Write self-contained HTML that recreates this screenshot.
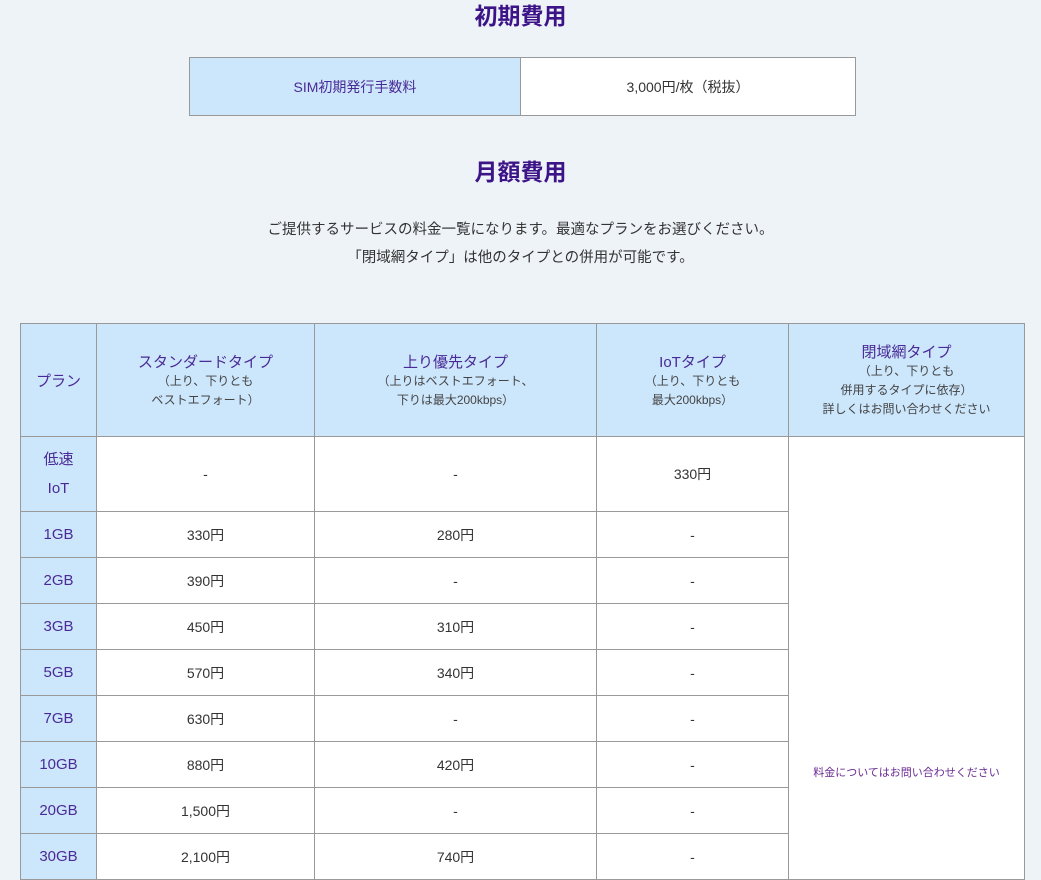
<!DOCTYPE html>
<html><head><meta charset="utf-8"><style>
body{margin:0;background:#eef3f8;font-family:"Liberation Sans","Noto Sans CJK JP",sans-serif;color:#333;width:1041px;height:879px;overflow:hidden;position:relative}
h2{position:absolute;left:0;width:1041px;text-align:center;margin:0;font-size:23px;color:#3d1488;font-weight:bold}
.t1{position:absolute;left:189px;top:57px;border-collapse:collapse}
.t1 td{border:1px solid #999;height:57px;text-align:center;font-size:14px;padding:0}
.p{position:absolute;left:0;width:1041px;text-align:center;font-size:14.5px;color:#333}
.t2{position:absolute;left:20px;top:323px;border-collapse:collapse;table-layout:fixed}
.t2 td,.t2 th{border:1px solid #999;text-align:center;padding:0;font-weight:normal;font-size:14px}
.t2 th{background:#cce6fb;color:#4a2a96;height:112px;font-size:15px}
.t2 th small{display:block;font-size:12px;color:#444;line-height:19px}
.t2 td.h{background:#cce6fb;color:#4a2a96;font-size:15px}
.t2 td{background:#fff;height:45px}
</style></head><body>
<h2 style="top:-3px">初期費用</h2>
<table class="t1"><tr><td style="width:330px;background:#cce6fb;color:#4a2a96">SIM初期発行手数料</td><td style="width:334px;background:#fff">3,000円/枚（税抜）</td></tr></table>
<h2 style="top:153px">月額費用</h2>
<div class="p" style="top:218px">ご提供するサービスの料金一覧になります。最適なプランをお選びください。</div>
<div class="p" style="top:246px">「閉域網タイプ」は他のタイプとの併用が可能です。</div>
<table class="t2">
<colgroup><col style="width:76px"><col style="width:218px"><col style="width:282px"><col style="width:192px"><col style="width:236px"></colgroup>
<tr><th>プラン</th><th>スタンダードタイプ<small>（上り、下りとも<br>ベストエフォート）</small></th><th>上り優先タイプ<small>（上りはベストエフォート、<br>下りは最大200kbps）</small></th><th>IoTタイプ<small>（上り、下りとも<br>最大200kbps）</small></th><th>閉域網タイプ<small>（上り、下りとも<br>併用するタイプに依存）<br>詳しくはお問い合わせください</small></th></tr>
<tr><td class="h" style="height:74px;line-height:29px">低速<br>IoT</td><td>-</td><td>-</td><td>330円</td><td rowspan="9" style="font-size:11px;color:#6a2a90;padding-top:228px">料金についてはお問い合わせください</td></tr>
<tr><td class="h">1GB</td><td>330円</td><td>280円</td><td>-</td></tr>
<tr><td class="h">2GB</td><td>390円</td><td>-</td><td>-</td></tr>
<tr><td class="h">3GB</td><td>450円</td><td>310円</td><td>-</td></tr>
<tr><td class="h">5GB</td><td>570円</td><td>340円</td><td>-</td></tr>
<tr><td class="h">7GB</td><td>630円</td><td>-</td><td>-</td></tr>
<tr><td class="h">10GB</td><td>880円</td><td>420円</td><td>-</td></tr>
<tr><td class="h">20GB</td><td>1,500円</td><td>-</td><td>-</td></tr>
<tr><td class="h">30GB</td><td>2,100円</td><td>740円</td><td>-</td></tr>
</table>
</body></html>
